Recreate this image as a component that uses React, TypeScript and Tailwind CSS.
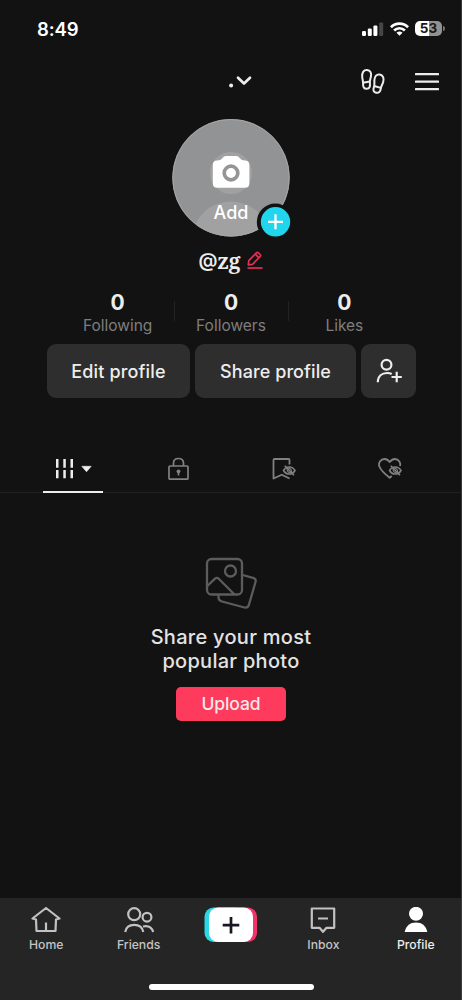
import React from "react";

const FONT = "font-['Inter','Noto_Sans',sans-serif]";

function StatusBar() {
  return (
    <div className="flex h-[57px] items-center justify-between pl-[37px] pr-[17px]">
      <span className="text-[18.5px] font-semibold leading-[20px] tracking-[-0.1px] text-white">8:49</span>
      <div className="flex items-center gap-[6px]">
        <svg width="22" height="14" viewBox="0 0 22 14">
          <rect x="0" y="9" width="4" height="5" rx="1.2" fill="#fff" />
          <rect x="5.8" y="6.5" width="4" height="7.5" rx="1.2" fill="#fff" />
          <rect x="11.4" y="3.6" width="4" height="10.4" rx="1.2" fill="#fff" />
          <rect x="17.2" y="0.4" width="4" height="13.6" rx="1.2" fill="#464646" />
        </svg>
        <svg width="19" height="14" viewBox="0 0 19 14" fill="none" stroke="#fff" strokeWidth="2.7">
          <path d="M.9 5.2C5.6.3 13.4.3 18.1 5.2" />
          <path d="M4.1 8.5C7.200 5.500 11.800 5.500 14.900 8.500" />
          <path d="M9.500 13.800L6.500 10.800C8.200 9.200 10.800 9.200 12.500 10.800Z" fill="#fff" stroke="none" />
        </svg>
        <div className="flex items-center gap-[1px]">
          <div className="flex h-[15px] w-[27px] items-center justify-center rounded-[5px] bg-[linear-gradient(90deg,#fff_0_53%,#929292_53%_100%)] text-[13.5px] font-bold leading-none text-[#191919]">
            53
          </div>
          <div className="h-[5px] w-[2px] rounded-r-full bg-[#737373]" />
        </div>
      </div>
    </div>
  );
}

function Header() {
  return (
    <header className="flex h-[48px] items-center pl-[229px] pr-[23px]">
      <svg width="23" height="14" viewBox="229 74 23 14">
        <circle cx="231.1" cy="85.4" r="2" fill="#ededed" />
        <path d="M238 77.800L244 83.500L250 77.800" fill="none" stroke="#ededed" strokeWidth="2.700" strokeLinecap="round" strokeLinejoin="round" />
      </svg>
      <div className="ml-auto flex items-center gap-[29px]">
        <svg width="26" height="28" viewBox="360.500 67 26 28" fill="none" stroke="#ededed" strokeWidth="2" strokeLinejoin="round">
          <path d="M367.500 70C371 70.200 372.200 73.200 371.400 76.800C370.800 79.400 370.100 80.400 370.400 83C370.800 86.800 370 88.600 367.300 88.800C364.500 88.900 363.400 87 363.600 84C363.800 81.800 363 79.800 362.700 77C362.300 72.800 364 69.900 367.500 70Z" />
          <path d="M363.500 82.700L370.300 81.500" />
          <path d="M380.200 74.500C383.600 75.200 384.800 78.400 383.700 82C382.800 84.900 381.600 86.200 381.300 88.600C380.900 91.800 379.200 93.300 376.600 92.700C374 92 373.300 90.300 374.400 87.200C375.400 84.300 374.700 82.900 374.900 80C375.200 76.200 377.200 73.900 380.200 74.500Z" />
          <path d="M374.600 86L381.300 87.900" />
        </svg>
        <svg className="mt-[1px]" width="24" height="18" viewBox="0 0 24 18" fill="#ededed">
          <rect y="0" width="24" height="2.300" rx=".5" />
          <rect y="7.500" width="24" height="2.300" rx=".5" />
          <rect y="15" width="24" height="2.300" rx=".5" />
        </svg>
      </div>
    </header>
  );
}

function Avatar() {
  return (
    <div className="relative mx-auto mt-[14px] h-[118px] w-[118px]">
      <svg className="block" width="118" height="118" viewBox="0 0 118 118">
        <defs>
          <clipPath id="avatar">
            <circle cx="59" cy="58.700" r="58.700" />
          </clipPath>
        </defs>
        <g clipPath="url(#avatar)">
          <rect width="118" height="118" fill="#929394" />
          <circle cx="59" cy="54" r="21" fill="#a1a1a1" />
          <ellipse cx="59" cy="118" rx="38" ry="35.500" fill="#a1a1a1" />
        </g>
        <circle cx="59" cy="58.700" r="58.200" fill="none" stroke="#a5a5a5" />
        <path d="M45.200 41.500Q48.800 41.500 50.300 39.200Q51.600 37 54.200 37H64Q66.600 37 67.900 39.200Q69.400 41.500 73 41.500Q77.400 41.500 77.400 46V64.200Q77.400 68.700 73 68.700H45.200Q40.800 68.700 40.800 64.200V46Q40.800 41.500 45.200 41.500Z" fill="#fff" />
        <circle cx="59" cy="54" r="6.800" fill="#fff" stroke="#959595" strokeWidth="3.700" />
      </svg>
      <span className="absolute inset-x-0 top-[82px] text-center text-[18px] font-medium leading-[23px] text-white">Add</span>
      <svg className="absolute left-[84px] top-[84px]" width="38" height="38" viewBox="0 0 38 38">
        <circle cx="19.300" cy="19" r="18.500" fill="#121212" />
        <circle cx="19.500" cy="18.800" r="14.700" fill="#20d5ec" />
        <path d="M19.500 11.300V26.300M12 18.800H27" stroke="#fff" strokeWidth="2.300" />
      </svg>
    </div>
  );
}

function Handle() {
  return (
    <div className="mt-[10px] flex h-[28px] items-center justify-center gap-[7px]">
      <span className="flex items-center leading-[28px] text-[#ededed]">
        <span className="text-[19px] font-semibold">@</span>
        <span className="font-['Noto_Serif','Liberation_Serif',serif] text-[21px] font-bold">zg</span>
      </span>
      <svg className="-mt-[2px]" width="16" height="18" viewBox="0 0 16 18" fill="none" stroke="#e52e54" strokeWidth="1.700" strokeLinejoin="round">
        <path d="M1.300 13.800L1.800 9.700L9.400 1.800Q10.400.8 11.400 1.800L13.200 3.500Q14.200 4.500 13.200 5.500L5.500 13.300Z" />
        <path d="M8.300 3.200L11.800 6.700" />
        <path d="M.5 17H15.500" />
      </svg>
    </div>
  );
}

const STATS = ["Following", "Followers", "Likes"];

function Stats() {
  return (
    <div className="mx-auto mt-[16px] grid h-[45px] w-[340px] grid-cols-3">
      {STATS.map((label, i) => (
        <div key={label} className="relative flex flex-col items-center">
          <span className="text-[21px] font-bold leading-[24px] text-[#ededed]">0</span>
          <span className="text-[15.5px] leading-[21px] text-[#7e7e7e]">{label}</span>
          {i < 2 && <div className="absolute -right-px top-[10px] h-[20px] w-px bg-[#222]" />}
        </div>
      ))}
    </div>
  );
}

function Actions() {
  return (
    <div className="ml-[47px] mt-[8px] flex h-[54px] gap-[5px] text-[18px] font-medium text-[#ededed]">
      <button className="w-[143px] rounded-[9px] bg-[#2e2e2e] tracking-[0.14px]">Edit profile</button>
      <button className="w-[161px] rounded-[9px] bg-[#2e2e2e] tracking-[0.08px]">Share profile</button>
      <button className="flex w-[55px] items-center justify-center rounded-[9px] bg-[#2e2e2e]">
        <svg width="26" height="26" viewBox="375.500 358.500 26 26" fill="none" stroke="#ededed" strokeWidth="2.200">
          <circle cx="386" cy="365.200" r="4.900" />
          <path d="M377.300 382.700C377.500 376.500 381.500 373.500 386.500 373.500Q389.300 373.500 391.200 374.500" />
          <path d="M396.200 372.300V382.700M391 377.500H401.300" />
        </svg>
      </button>
    </div>
  );
}

function HiddenEye() {
  return (
    <g strokeWidth="1.600">
      <path d="M11.500 13.500C14.200 8.800 20.300 8.800 23 13.500C20.300 18.200 14.200 18.200 11.500 13.500Z" />
      <path d="M12.800 8.800L22 18.300" />
      <path d="M15 11.800Q15 15.700 18.600 15.800M16.200 11Q19.700 11.500 19.600 15" strokeWidth="1.100" />
    </g>
  );
}

function Tabs() {
  return (
    <div className="mt-[47px] grid h-[48px] grid-cols-4 border-b border-[#202020] pl-[20px] pr-[19px]">
      <div className="relative flex items-center justify-center">
        <svg width="38" height="22" viewBox="55 458 38 22" fill="#ededed">
          <path d="M57 459h2.500v8.700H57zM64.300 459h2.500v8.700h-2.500zM71.500 459h2.500v8.700h-2.500zM57 470h2.500v8.300H57zM64.300 470h2.500v8.300h-2.500zM71.500 470h2.500v8.300h-2.500z" />
          <path d="M82.800 466.300H92.200L87.500 471.800Z" stroke="#ededed" strokeWidth=".6" strokeLinejoin="round" />
        </svg>
        <div className="absolute bottom-[-1px] left-[23px] h-[2.500px] w-[60px] bg-[#ededed]" />
      </div>
      <div className="flex items-center justify-center">
        <svg width="22" height="24" viewBox="0.500 0 22 24" fill="none" stroke="#818181" strokeWidth="1.700">
          <rect x="1.500" y="9" width="19" height="13.200" rx="1" />
          <path d="M6 9V6.200Q6 1.500 11 1.500Q16 1.500 16 6.200V9" />
          <circle cx="11" cy="14.300" r="1.900" fill="#818181" stroke="none" />
          <path d="M11 14.500V18.500" />
        </svg>
      </div>
      <div className="flex items-center justify-center">
        <svg width="24" height="24" viewBox="0 0 24 24" fill="none" stroke="#818181" strokeWidth="1.800" strokeLinejoin="round">
          <path d="M17.500 7.500V3Q17.500 2 16.500 2H2.500Q1.500 2 1.500 3V21.500L9.800 17.700L17.500 21.500" />
          <HiddenEye />
        </svg>
      </div>
      <div className="flex items-center justify-center">
        <svg width="24" height="24" viewBox="0 0 24 24" fill="none" stroke="#818181" strokeWidth="1.800" strokeLinejoin="round">
          <path d="M22 9C23 5.500 20.500 2 17 2Q14 2 11.700 5Q9.500 2 6.500 2C2.500 2 0 6 1.400 9.500C2.500 12.500 7.500 17.500 11.700 20.700L13.700 19" />
          <HiddenEye />
        </svg>
      </div>
    </div>
  );
}

function EmptyState() {
  return (
    <section className="flex flex-col items-center pt-[64px]">
      <svg width="52" height="54" viewBox="0 0 52 54" fill="none" stroke="#5c5c5c" strokeWidth="2.300" strokeLinejoin="round">
        <rect x="2" y="2" width="35" height="35.500" rx="4.500" />
        <circle cx="25.500" cy="14" r="5.500" />
        <path d="M2.300 29L10 21.700Q12 20 14 22L29.500 37.500" />
        <path d="M37.500 18L48 20.800Q51.500 21.700 50.500 25L44 47.500Q43 51.300 39.500 50.500L17 44.500Q13.500 43.500 13.500 40.500V37.500" />
      </svg>
      <p className="mt-[15px] text-center text-[20px] font-medium leading-[23.500px] tracking-[0.28px] text-[#e3e3e3]">
        Share your most
        <br />
        popular photo
      </p>
      <button className="mt-[14px] h-[34px] w-[110px] rounded-[5px] bg-[#fe3b5c] text-[17.500px] font-medium tracking-[-0.1px] text-[#f4e8ea]">Upload</button>
    </section>
  );
}

function NavItem({ label, active, children }: { label: string; active?: boolean; children: React.ReactNode }) {
  return (
    <div className="flex flex-col items-center">
      <svg width="32" height="30" viewBox="0 0 32 30" fill="none" stroke={active ? "#fff" : "#c2c2c2"} strokeWidth="2.200">
        {children}
      </svg>
      <span className={active ? "text-[12.2px] font-medium leading-[16px] text-[#eee]" : "text-[12.2px] font-medium leading-[16px] text-[#c4c4c4]"}>
        {label}
      </span>
    </div>
  );
}

function BottomNav() {
  return (
    <nav className="flex h-[102px] flex-col items-center bg-[#252525] pt-[9px]">
      <div className="grid h-[77px] w-full grid-cols-5">
        <NavItem label="Home">
          <path d="M2.500 11.500L16 1L29.500 11.500L26 12.500L25.500 24H6.500L6 12.500ZM16 24V15.500" strokeLinejoin="round" />
        </NavItem>
        <NavItem label="Friends">
          <circle cx="11.200" cy="7.200" r="6" />
          <circle cx="24" cy="10.200" r="4.400" />
          <path d="M2.200 25C3 20.500 6.500 17.800 11.200 17.800S19.500 20.500 20.300 25M20 19.500Q28 17.800 30.200 25" />
        </NavItem>
        <div className="flex justify-center">
          <svg width="54" height="36" viewBox="0 0 54 36">
            <rect x=".5" y=".5" width="40" height="34.500" rx="9" fill="#2bd6e5" />
            <rect x="13" y=".5" width="40" height="34.500" rx="9" fill="#f23369" />
            <rect x="5" y=".5" width="44" height="34.500" rx="9" fill="#fff" />
            <path d="M27 10V26.500M18.700 18.200H35.300" stroke="#171822" strokeWidth="2.700" />
          </svg>
        </div>
        <NavItem label="Inbox">
          <path d="M4.800 1.500H27.200V20.800H19.500L16 24.800L12.500 20.800H4.800ZM11 11.500H21" strokeLinejoin="round" />
        </NavItem>
        <NavItem label="Profile" active>
          <circle cx="16" cy="6.800" r="7" fill="#fff" stroke="none" />
          <path d="M4.700 25C6 18.500 10.300 15.500 16 15.500S26 18.500 27.300 25Z" fill="#fff" stroke="none" />
        </NavItem>
      </div>
      <div className="h-[6px] w-[165px] rounded-full bg-white" />
    </nav>
  );
}

export default function App() {
  return (
    <main className={`relative flex h-[1000px] w-[462px] flex-col bg-[#121212] ${FONT}`}>
      <StatusBar />
      <Header />
      <Avatar />
      <Handle />
      <Stats />
      <Actions />
      <Tabs />
      <EmptyState />
      <div className="mt-auto">
        <BottomNav />
      </div>
      <div className="absolute inset-y-0 right-0 w-px bg-[#3a3a3a]" />
    </main>
  );
}
